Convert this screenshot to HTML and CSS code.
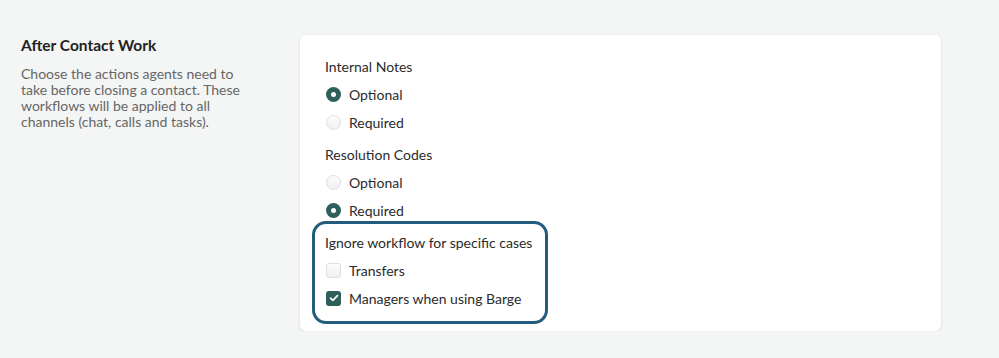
FILE: index.html
```html
<!DOCTYPE html>
<html lang="en">
<head>
    <meta charset="UTF-8">
    <title>After Contact Work</title>
    <link rel="stylesheet" href="styles.css">
</head>
<body>
    <div class="settings-row">
        <div class="intro">
            <h2>After Contact Work</h2>
            <p>Choose the actions agents need to take before closing a contact. These workflows will be applied to all channels (chat, calls and tasks).</p>
        </div>

        <div class="card">
            <div class="group">
                <div class="group-label">Internal Notes</div>
                <label class="option"><span class="radio checked"></span>Optional</label>
                <label class="option"><span class="radio"></span>Required</label>
            </div>

            <div class="group">
                <div class="group-label">Resolution Codes</div>
                <label class="option"><span class="radio"></span>Optional</label>
                <label class="option"><span class="radio checked"></span>Required</label>
            </div>

            <div class="group highlight">
                <div class="group-label">Ignore workflow for specific cases</div>
                <label class="option"><span class="check"></span>Transfers</label>
                <label class="option">
                    <span class="check checked">
                        <svg width="10" height="8" viewBox="0 0 10 8"><path d="M1.5 4.2 L3.9 6.4 L8.5 1.6" fill="none" stroke="#fff" stroke-width="1.7" stroke-linecap="round" stroke-linejoin="round"/></svg>
                    </span>Managers when using Barge
                </label>
            </div>
        </div>
    </div>
</body>
</html>
```

FILE: styles.css
```css
body {
    margin: 0;
    padding: 35px 58px 0 21px;
    background-color: #f4f5f5;
    font-family: Lato, "Open Sans", sans-serif;
    color: #2b2b2b;
}
.settings-row {
    display: flex;
}
.intro {
    width: 279px;
    flex-shrink: 0;
}
.intro h2 {
    margin: 1px 0 0;
    font-size: 15.5px;
    line-height: 18px;
    font-weight: bold;
    color: #222;
}
.intro p {
    margin: 12px 0 0;
    width: 236px;
    font-size: 14px;
    line-height: 16px;
    color: #666;
}
.card {
    width: 641px;
    background: #fff;
    border-radius: 6px;
    box-shadow: 0 1px 3px rgba(0, 0, 0, 0.13);
    padding: 17px 25px 7px;
    box-sizing: border-box;
}
.group {
    display: flex;
    flex-direction: column;
}
.group + .group {
    margin-top: 4px;
}
.group-label,
.option {
    height: 28px;
    display: flex;
    align-items: center;
    font-size: 14px;
}
.option {
    gap: 8px;
    padding-left: 1px;
}
.radio {
    width: 15px;
    height: 15px;
    border-radius: 50%;
    box-sizing: border-box;
    border: 1px solid #dedede;
    background: linear-gradient(#fdfdfd, #f0f0f0);
    display: flex;
    align-items: center;
    justify-content: center;
}
.radio.checked {
    border: none;
    background: #2e5f5a;
}
.radio.checked::after {
    content: "";
    width: 5px;
    height: 5px;
    border-radius: 50%;
    background: #fff;
}
.check {
    width: 15px;
    height: 15px;
    border-radius: 3px;
    box-sizing: border-box;
    border: 1px solid #dedede;
    background: linear-gradient(#fdfdfd, #f0f0f0);
    display: flex;
    align-items: center;
    justify-content: center;
}
.check.checked {
    border: none;
    background: #2e5f5a;
}
.group.highlight {
    margin: -3px 0 0 -13px;
    padding: 4px 13px 9px 10px;
    border: 3px solid #235c7c;
    border-radius: 14px;
    width: fit-content;
}
```
